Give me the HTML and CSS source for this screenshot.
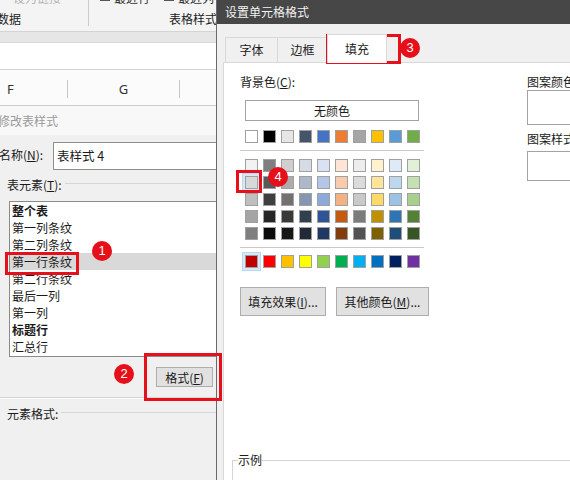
FILE: index.html
```html
<!DOCTYPE html>
<html lang="zh-CN">
<head>
<meta charset="utf-8">
<title>设置单元格格式</title>
<link rel="stylesheet" href="styles.css">
</head>
<body>
<div class="screen">
  <div class="excel">
    <div class="ribbon">
      <div class="rgroup rgroup-data">
        <div class="rtop faint">一设为链接</div>
        <div class="rlabel">数据</div>
      </div>
      <div class="rgroup rgroup-style">
        <div class="rtop"><span class="cb"></span><span class="cbt">最近行</span><span class="cb"></span><span class="cbt">最近列</span></div>
        <div class="rlabel right">表格样式</div>
      </div>
    </div>
    <div class="band"></div>
    <div class="fbar"></div>
    <div class="colhdr">
      <div class="col c-f">F</div>
      <div class="col c-g">G</div>
      <div class="col c-h"></div>
    </div>
    <div class="modify">
      <div class="mtitle">修改表样式</div>
      <div class="mbody">
        <div class="namerow">
          <span class="nlabel">名称(<u>N</u>):</span>
          <div class="ninput">表样式 4</div>
        </div>
        <div class="grouphead gh-elem"><span>表元素(<u>T</u>):</span><i class="gline"></i></div>
        <ul class="listbox">
          <li class="b">整个表</li>
          <li>第一列条纹</li>
          <li>第二列条纹</li>
          <li class="sel">第一行条纹</li>
          <li>第二行条纹</li>
          <li>最后一列</li>
          <li>第一列</li>
          <li class="b">标题行</li>
          <li>汇总行</li>
        </ul>
        <div class="btnrow"><button class="btn fmt">格式(<u>F</u>)</button></div>
        <div class="sep"></div>
        <div class="grouphead gh-fmt"><span>元素格式:</span><i class="gline"></i></div>
      </div>
    </div>
  </div>

  <div class="dialog">
    <div class="dtitle">设置单元格格式</div>
    <div class="dbody">
      <div class="tabs">
        <div class="tab t1">字体</div>
        <div class="tab t2">边框</div>
        <div class="tab t3 active">填充</div>
      </div>
      <div class="panel">
        <div class="pcols">
          <div class="bgcol">
            <div class="plabel">背景色(<u>C</u>):</div>
            <div class="nocolor">无颜色</div>
            <div class="swrow r-theme">
              <i class="sw" style="background:#ffffff"></i><i class="sw" style="background:#000000"></i><i class="sw" style="background:#e7e6e6"></i><i class="sw" style="background:#44546a"></i><i class="sw" style="background:#4472c4"></i><i class="sw" style="background:#ed7d31"></i><i class="sw" style="background:#a5a5a5"></i><i class="sw" style="background:#ffc000"></i><i class="sw" style="background:#5b9bd5"></i><i class="sw" style="background:#70ad47"></i>
            </div>
            <div class="hr"></div>
            <div class="swgrid">
              <i class="sw" style="background:#f2f2f2"></i><i class="sw" style="background:#7f7f7f"></i><i class="sw" style="background:#d0cece"></i><i class="sw" style="background:#d6dce4"></i><i class="sw" style="background:#d9e2f3"></i><i class="sw" style="background:#fbe5d5"></i><i class="sw" style="background:#ededed"></i><i class="sw" style="background:#fff2cc"></i><i class="sw" style="background:#deebf6"></i><i class="sw" style="background:#e2efd9"></i>
              <i class="sw on" style="background:#d8d8d8"></i><i class="sw" style="background:#595959"></i><i class="sw" style="background:#aeabab"></i><i class="sw" style="background:#adb9ca"></i><i class="sw" style="background:#b4c6e7"></i><i class="sw" style="background:#f7cbac"></i><i class="sw" style="background:#dbdbdb"></i><i class="sw" style="background:#fee599"></i><i class="sw" style="background:#bdd7ee"></i><i class="sw" style="background:#c5e0b3"></i>
              <i class="sw" style="background:#bfbfbf"></i><i class="sw" style="background:#3f3f3f"></i><i class="sw" style="background:#757070"></i><i class="sw" style="background:#8496b0"></i><i class="sw" style="background:#8eaadb"></i><i class="sw" style="background:#f4b183"></i><i class="sw" style="background:#c9c9c9"></i><i class="sw" style="background:#ffd965"></i><i class="sw" style="background:#9cc3e5"></i><i class="sw" style="background:#a8d08d"></i>
              <i class="sw" style="background:#a5a5a5"></i><i class="sw" style="background:#262626"></i><i class="sw" style="background:#3a3838"></i><i class="sw" style="background:#323f4f"></i><i class="sw" style="background:#2f5496"></i><i class="sw" style="background:#c55a11"></i><i class="sw" style="background:#7b7b7b"></i><i class="sw" style="background:#bf9000"></i><i class="sw" style="background:#2e75b5"></i><i class="sw" style="background:#538135"></i>
              <i class="sw" style="background:#7f7f7f"></i><i class="sw" style="background:#0c0c0c"></i><i class="sw" style="background:#171616"></i><i class="sw" style="background:#222a35"></i><i class="sw" style="background:#1f3864"></i><i class="sw" style="background:#833c0b"></i><i class="sw" style="background:#525252"></i><i class="sw" style="background:#7f6000"></i><i class="sw" style="background:#1e4e79"></i><i class="sw" style="background:#375623"></i>
            </div>
            <div class="hr"></div>
            <div class="swrow r-std">
              <i class="sw on" style="background:#c00000"></i><i class="sw" style="background:#ff0000"></i><i class="sw" style="background:#ffc000"></i><i class="sw" style="background:#ffff00"></i><i class="sw" style="background:#92d050"></i><i class="sw" style="background:#00b050"></i><i class="sw" style="background:#00b0f0"></i><i class="sw" style="background:#0070c0"></i><i class="sw" style="background:#002060"></i><i class="sw" style="background:#7030a0"></i>
            </div>
            <div class="btns">
              <button class="btn fx">填充效果(<u>I</u>)...</button>
              <button class="btn more">其他颜色(<u>M</u>)...</button>
            </div>
          </div>
          <div class="patcol">
            <div class="plabel">图案颜色(<u>A</u>):</div>
            <div class="pbox pb1"></div>
            <div class="plabel pl2">图案样式(<u>P</u>):</div>
            <div class="pbox pb2"></div>
          </div>
        </div>
        <fieldset class="sample"><legend>示例</legend></fieldset>
      </div>
    </div>
  </div>

  <div class="redbox rb1"></div>
  <div class="redbox rb2"></div>
  <div class="redbox rb3"></div>
  <div class="redbox rb4"></div>
  <div class="badge bd1">1</div>
  <div class="badge bd2">2</div>
  <div class="badge bd3">3</div>
  <div class="badge bd4">4</div>
</div>
</body>
</html>
```
FILE: styles.css
```css
* { box-sizing: border-box; margin: 0; padding: 0; }
html, body { width: 570px; height: 480px; overflow: hidden; }
body {
  font-family: "Noto Sans CJK SC", "Noto Sans", sans-serif;
  font-size: 12px;
  color: #1a1a1a;
  background: #f0f0f0;
}
u { text-decoration: underline; text-underline-offset: 1px; }
button { font: inherit; color: inherit; }

.screen { position: relative; display: flex; width: 570px; height: 480px; overflow: hidden; }

/* ---------- left: excel + modify dialog ---------- */
.excel { width: 216px; flex: none; display: flex; flex-direction: column; overflow: hidden; background: #f0f0f0; }
.ribbon { height: 32px; flex: none; background: #f4f4f4; border-bottom: 1px solid #d4d4d4; display: flex; align-items: flex-start; }
.rgroup { height: 26px; display: flex; flex-direction: column; }
.rgroup-data { width: 88px; }
.rgroup-style { flex: 1; border-left: 1px solid #cacaca; }
.rtop { height: 14px; line-height: 14px; margin-top: -9px; white-space: nowrap; overflow: hidden; display: flex; align-items: center; }
.faint { color: #b4b4b4; padding-left: 1px; }
.cb { width: 10px; height: 10px; border: 1px solid #555; background: #fff; flex: none; margin-left: 11px; margin-top: -4px; }
.cbt { margin-left: 4px; color: #333; }
.cbt + .cb { margin-left: 14px; }
.rlabel { line-height: 14px; margin-top: 8px; white-space: nowrap; color: #222; }
.rgroup-data .rlabel { margin-left: -3px; }
.rlabel.right { text-align: right; margin-right: -1px; }

.band { height: 11px; flex: none; background: #e6e6e6; border-bottom: 1px solid #d8d8d8; }
.fbar { height: 27px; flex: none; background: #ffffff; border-bottom: 1px solid #d2d2d2; }
.colhdr { height: 36px; flex: none; background: #fbfbfb; border-bottom: 1px solid #cdcdcd; display: flex; align-items: flex-start; padding-top: 10px; }
.col { height: 18px; line-height: 18px; font-family: "Noto Sans", sans-serif; font-size: 13px; color: #333; }
.c-f { width: 67px; padding-left: 7px; }
.c-g { width: 112px; border-left: 1px solid #c6c6c6; text-align: center; }
.c-h { flex: 1; border-left: 1px solid #c6c6c6; }

.modify { flex: 1; display: flex; flex-direction: column; background: #f0f0f0; }
.mtitle { height: 29px; line-height: 29px; background: #f8f8f8; color: #9a9a9a; margin-left: -2px; padding-left: 0; white-space: nowrap; }
.mbody { flex: 1; display: flex; flex-direction: column; }
.namerow { margin-top: 7px; height: 28px; display: flex; align-items: center; }
.nlabel { width: 54px; flex: none; margin-left: -1px; margin-top: -3px; white-space: nowrap; }
.ninput { flex: 1; height: 28px; line-height: 26px; background: #fff; border: 1px solid #8e8e8e; border-right: none; padding-left: 3px; font-size: 12.5px; }
.grouphead { height: 14px; line-height: 14px; display: flex; align-items: center; padding-left: 7px; }
.gh-elem { margin-top: 8px; }
.gh-fmt { margin-top: 8px; }
.grouphead span { white-space: nowrap; }
.gline { flex: 1; height: 1px; background: #d6d6d6; margin-left: 3px; margin-top: -3px; }
.listbox { list-style: none; margin-top: 9px; margin-left: 9px; height: 156px; background: #fff; border: 1px solid #8a8a8a; border-right: none; padding-top: 0; }
.listbox li { height: 17px; line-height: 17px; padding-left: 2px; white-space: nowrap; }
.listbox li.b { font-weight: bold; }
.listbox li.sel { background: #d9d9d9; }
.btnrow { margin-top: 10px; height: 20px; display: flex; }
.btn { background: #e1e1e1; border: 1px solid #adadad; cursor: default; white-space: nowrap; }
.fmt { margin-left: 156px; width: 57px; height: 20px; line-height: 17px; }
.sep { margin-top: 10px; height: 2px; border-top: 1px solid #d4d4d4; border-bottom: 1px solid #fbfbfb; }

/* ---------- right: format cells dialog ---------- */
.dialog { flex: 1; display: flex; flex-direction: column; border-left: 1px solid #6a6a6a; overflow: hidden; background: #f0f0f0; }
.dtitle { height: 24px; flex: none; line-height: 24px; background: #474747; color: #f2f2f2; padding-left: 8px; white-space: nowrap; }
.dbody { flex: 1; width: 480px; display: flex; flex-direction: column; padding: 10px 0 0 6px; }
.tabs { display: flex; align-items: flex-end; height: 29px; margin-left: 2px; margin-bottom: -1px; }
.tab { height: 26px; line-height: 24px; text-align: center; border: 1px solid #d9d9d9; border-right: none; border-bottom: none; background: #f0f0f0; }
.t1 { width: 52px; }
.t2 { width: 50px; }
.t3 { width: 60px; }
.tab.active { height: 29px; line-height: 28px; background: #fff; border-right: 1px solid #d9d9d9; position: relative; z-index: 1; }
.panel { flex: 1; background: #fff; border: 1px solid #d9d9d9; border-right: none; padding: 12px 0 0 16px; display: flex; flex-direction: column; }
.pcols { display: flex; }
.bgcol { width: 287px; flex: none; }
.plabel { height: 14px; line-height: 14px; white-space: nowrap; }
.nocolor { margin-top: 11px; margin-left: 5px; width: 174px; height: 21px; line-height: 19px; text-align: center; border: 1px solid #a3a3a3; background: #fff; }
.swrow, .swgrid { display: grid; grid-template-columns: repeat(10, 13px); column-gap: 5px; row-gap: 4px; margin-left: 5px; }
.r-theme { margin-top: 9px; }
.swgrid { margin-top: 8px; }
.r-std { margin-top: 7px; }
.sw { display: block; width: 13px; height: 13px; border: 1px solid #a0a0a0; }
.sw.on { box-shadow: 0 0 0 2px #d6e9f8, 0 0 0 3px #b9d7f1; }
.hr { margin-top: 7px; width: 184px; height: 1px; background: #c9c9c9; }
.btns { margin-top: 19px; display: flex; gap: 10px; }
.btns .btn { height: 29px; }
.fx { width: 86px; }
.more { width: 93px; }
.patcol { width: 150px; flex: none; }
.pbox { background: #fff; border: 1px solid #a3a3a3; border-right: none; }
.pb1 { margin-top: 1px; height: 35px; }
.pl2 { margin-top: 7px; }
.pb2 { margin-top: 5px; height: 30px; }
.sample { margin-top: 137px; margin-left: -8px; border: 1px solid #d5d5d5; border-right: none; padding: 0 5px; height: 60px; }
.sample legend { padding: 0; line-height: 14px; }

/* ---------- annotations ---------- */
.redbox { position: absolute; border: 3px solid #e5101a; }
.rb1 { left: 5px; top: 252px; width: 74px; height: 23px; }
.rb2 { left: 144px; top: 353px; width: 78px; height: 48px; }
.rb3 { left: 326px; top: 34px; width: 75px; height: 30px; }
.rb4 { left: 236px; top: 170px; width: 26px; height: 23px; }
.badge { position: absolute; width: 20px; height: 20px; border-radius: 50%; background: #e5101a; color: #fff; font-family: "Liberation Sans", sans-serif; font-size: 13px; line-height: 20px; text-align: center; }
.bd1 { left: 92px; top: 241px; }
.bd2 { left: 114px; top: 364px; }
.bd3 { left: 400px; top: 38px; }
.bd4 { left: 268px; top: 167px; }
```
